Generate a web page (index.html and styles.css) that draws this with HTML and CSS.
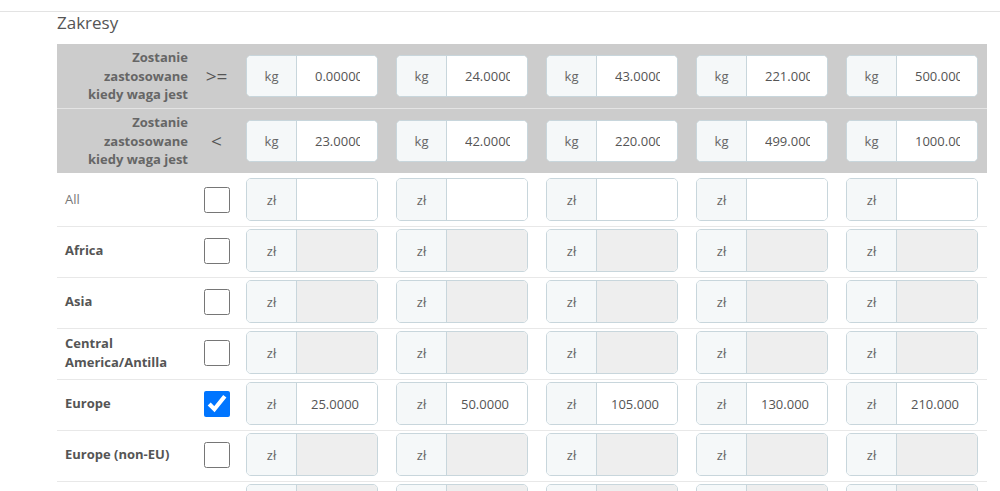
FILE: index.html
```html
<!DOCTYPE html>
<html lang="pl">
<head>
<meta charset="utf-8">
<title>Zakresy</title>
<link rel="stylesheet" href="styles.css">
</head>
<body>
<div class="topline"></div>
<section class="ranges">
  <h3 class="title">Zakresy</h3>
  <table class="grid">
    <colgroup>
      <col class="c-label">
      <col class="c-op">
      <col class="c-val"><col class="c-val"><col class="c-val"><col class="c-val"><col class="c-val">
    </colgroup>
    <thead>
      <tr class="hrow">
        <th class="hlabel">Zostanie zastosowane kiedy waga jest</th>
        <td class="op">&gt;=</td>
        <td class="val"><div class="ig"><span class="addon">kg</span><input class="inp" type="text" value="0.000000"></div></td>
        <td class="val"><div class="ig"><span class="addon">kg</span><input class="inp" type="text" value="24.000000"></div></td>
        <td class="val"><div class="ig"><span class="addon">kg</span><input class="inp" type="text" value="43.000000"></div></td>
        <td class="val"><div class="ig"><span class="addon">kg</span><input class="inp" type="text" value="221.000000"></div></td>
        <td class="val"><div class="ig"><span class="addon">kg</span><input class="inp" type="text" value="500.000000"></div></td>
      </tr>
      <tr class="hrow">
        <th class="hlabel">Zostanie zastosowane kiedy waga jest</th>
        <td class="op">&lt;</td>
        <td class="val"><div class="ig"><span class="addon">kg</span><input class="inp" type="text" value="23.000000"></div></td>
        <td class="val"><div class="ig"><span class="addon">kg</span><input class="inp" type="text" value="42.000000"></div></td>
        <td class="val"><div class="ig"><span class="addon">kg</span><input class="inp" type="text" value="220.000000"></div></td>
        <td class="val"><div class="ig"><span class="addon">kg</span><input class="inp" type="text" value="499.000000"></div></td>
        <td class="val"><div class="ig"><span class="addon">kg</span><input class="inp" type="text" value="1000.000000"></div></td>
      </tr>
    </thead>
    <tbody>
      <tr class="brow">
        <td class="name all">All</td>
        <td class="op"><input class="cb" type="checkbox"></td>
        <td class="val"><div class="ig big"><span class="addon">zł</span><input class="inp" type="text" value=""></div></td>
        <td class="val"><div class="ig big"><span class="addon">zł</span><input class="inp" type="text" value=""></div></td>
        <td class="val"><div class="ig big"><span class="addon">zł</span><input class="inp" type="text" value=""></div></td>
        <td class="val"><div class="ig big"><span class="addon">zł</span><input class="inp" type="text" value=""></div></td>
        <td class="val"><div class="ig big"><span class="addon">zł</span><input class="inp" type="text" value=""></div></td>
      </tr>
      <tr class="brow">
        <td class="name">Africa</td>
        <td class="op"><input class="cb" type="checkbox"></td>
        <td class="val"><div class="ig big"><span class="addon">zł</span><input class="inp" type="text" disabled></div></td>
        <td class="val"><div class="ig big"><span class="addon">zł</span><input class="inp" type="text" disabled></div></td>
        <td class="val"><div class="ig big"><span class="addon">zł</span><input class="inp" type="text" disabled></div></td>
        <td class="val"><div class="ig big"><span class="addon">zł</span><input class="inp" type="text" disabled></div></td>
        <td class="val"><div class="ig big"><span class="addon">zł</span><input class="inp" type="text" disabled></div></td>
      </tr>
      <tr class="brow">
        <td class="name">Asia</td>
        <td class="op"><input class="cb" type="checkbox"></td>
        <td class="val"><div class="ig big"><span class="addon">zł</span><input class="inp" type="text" disabled></div></td>
        <td class="val"><div class="ig big"><span class="addon">zł</span><input class="inp" type="text" disabled></div></td>
        <td class="val"><div class="ig big"><span class="addon">zł</span><input class="inp" type="text" disabled></div></td>
        <td class="val"><div class="ig big"><span class="addon">zł</span><input class="inp" type="text" disabled></div></td>
        <td class="val"><div class="ig big"><span class="addon">zł</span><input class="inp" type="text" disabled></div></td>
      </tr>
      <tr class="brow">
        <td class="name">Central America/Antilla</td>
        <td class="op"><input class="cb" type="checkbox"></td>
        <td class="val"><div class="ig big"><span class="addon">zł</span><input class="inp" type="text" disabled></div></td>
        <td class="val"><div class="ig big"><span class="addon">zł</span><input class="inp" type="text" disabled></div></td>
        <td class="val"><div class="ig big"><span class="addon">zł</span><input class="inp" type="text" disabled></div></td>
        <td class="val"><div class="ig big"><span class="addon">zł</span><input class="inp" type="text" disabled></div></td>
        <td class="val"><div class="ig big"><span class="addon">zł</span><input class="inp" type="text" disabled></div></td>
      </tr>
      <tr class="brow">
        <td class="name">Europe</td>
        <td class="op"><input class="cb" type="checkbox" checked></td>
        <td class="val"><div class="ig big"><span class="addon">zł</span><input class="inp" type="text" value="25.000000"></div></td>
        <td class="val"><div class="ig big"><span class="addon">zł</span><input class="inp" type="text" value="50.000000"></div></td>
        <td class="val"><div class="ig big"><span class="addon">zł</span><input class="inp" type="text" value="105.000000"></div></td>
        <td class="val"><div class="ig big"><span class="addon">zł</span><input class="inp" type="text" value="130.000000"></div></td>
        <td class="val"><div class="ig big"><span class="addon">zł</span><input class="inp" type="text" value="210.000000"></div></td>
      </tr>
      <tr class="brow">
        <td class="name">Europe (non-EU)</td>
        <td class="op"><input class="cb" type="checkbox"></td>
        <td class="val"><div class="ig big"><span class="addon">zł</span><input class="inp" type="text" disabled></div></td>
        <td class="val"><div class="ig big"><span class="addon">zł</span><input class="inp" type="text" disabled></div></td>
        <td class="val"><div class="ig big"><span class="addon">zł</span><input class="inp" type="text" disabled></div></td>
        <td class="val"><div class="ig big"><span class="addon">zł</span><input class="inp" type="text" disabled></div></td>
        <td class="val"><div class="ig big"><span class="addon">zł</span><input class="inp" type="text" disabled></div></td>
      </tr>
      <tr class="brow">
        <td class="name">North America</td>
        <td class="op"><input class="cb" type="checkbox"></td>
        <td class="val"><div class="ig big"><span class="addon">zł</span><input class="inp" type="text" disabled></div></td>
        <td class="val"><div class="ig big"><span class="addon">zł</span><input class="inp" type="text" disabled></div></td>
        <td class="val"><div class="ig big"><span class="addon">zł</span><input class="inp" type="text" disabled></div></td>
        <td class="val"><div class="ig big"><span class="addon">zł</span><input class="inp" type="text" disabled></div></td>
        <td class="val"><div class="ig big"><span class="addon">zł</span><input class="inp" type="text" disabled></div></td>
      </tr>
    </tbody>
  </table>
</section>
</body>
</html>
```

FILE: styles.css
```css
* { box-sizing: border-box; }

html, body {
  margin: 0;
  padding: 0;
  background: #fff;
  overflow: hidden;
}

body {
  font-family: "Open Sans", "Liberation Sans", sans-serif;
  font-size: 13px;
  color: #555;
}

.topline {
  height: 12px;
  border-bottom: 1px solid #e3e3e3;
}

.ranges {
  padding-left: 57px;
}

.title {
  margin: 0 0 10px;
  font-size: 17px;
  font-weight: 400;
  line-height: 22px;
  color: #555;
}

.grid {
  width: 930px;
  table-layout: fixed;
  border-collapse: separate;
  border-spacing: 0;
}

.c-label { width: 139px; }
.c-op { width: 41px; }
.c-val { width: 150px; }

.grid th,
.grid td {
  padding: 0;
  vertical-align: middle;
  box-sizing: content-box;
}

.grid .hrow > th,
.grid .hrow > td {
  background: #cccccc;
  height: 64px;
}

.grid .hrow + .hrow > th,
.grid .hrow + .hrow > td {
  border-top: 1px solid #e4e4e4;
}

.grid .hlabel {
  padding-left: 18px;
  padding-right: 8px;
  text-align: right;
  font-weight: 700;
  line-height: 18.6px;
  color: #666;
}

.grid .op {
  text-align: center;
  font-size: 19px;
  color: #555;
}

.grid .val {
  padding-left: 9px;
  padding-right: 9px;
}

.grid .brow > td {
  border-top: 1px solid #e8e8e8;
  padding-top: 2px;
  padding-bottom: 5px;
}

.grid .brow:first-child > td {
  border-top: 0;
  padding-top: 5px;
}

.grid .name {
  padding-left: 8px;
  padding-right: 8px;
  font-weight: 700;
  line-height: 18.5px;
  color: #555;
}

.grid .name.all {
  font-weight: 400;
  color: #777;
}

.cb {
  display: block;
  width: 26px;
  height: 26px;
  margin: 0 auto;
}

.ig {
  display: flex;
  height: 42px;
  border: 1px solid #c8d6dc;
  border-radius: 5px;
  overflow: hidden;
  background: #fff;
}

.ig.big {
  height: 43px;
}

.addon {
  flex: 0 0 50px;
  display: flex;
  align-items: center;
  justify-content: center;
  background: #f5f8f9;
  border-right: 1px solid #c8d6dc;
  color: #666;
}

.inp {
  flex: 1 1 auto;
  width: 0;
  min-width: 0;
  height: 100%;
  margin: 0;
  border: 0;
  outline: 0;
  padding: 0 17px 0 18px;
  font: inherit;
  font-size: 13px;
  color: #555;
  background: #fff;
  text-align: right;
}

.big .inp {
  padding-left: 14px;
  padding-right: 18px;
}

.inp:disabled {
  background: #eeeeee;
}
```
